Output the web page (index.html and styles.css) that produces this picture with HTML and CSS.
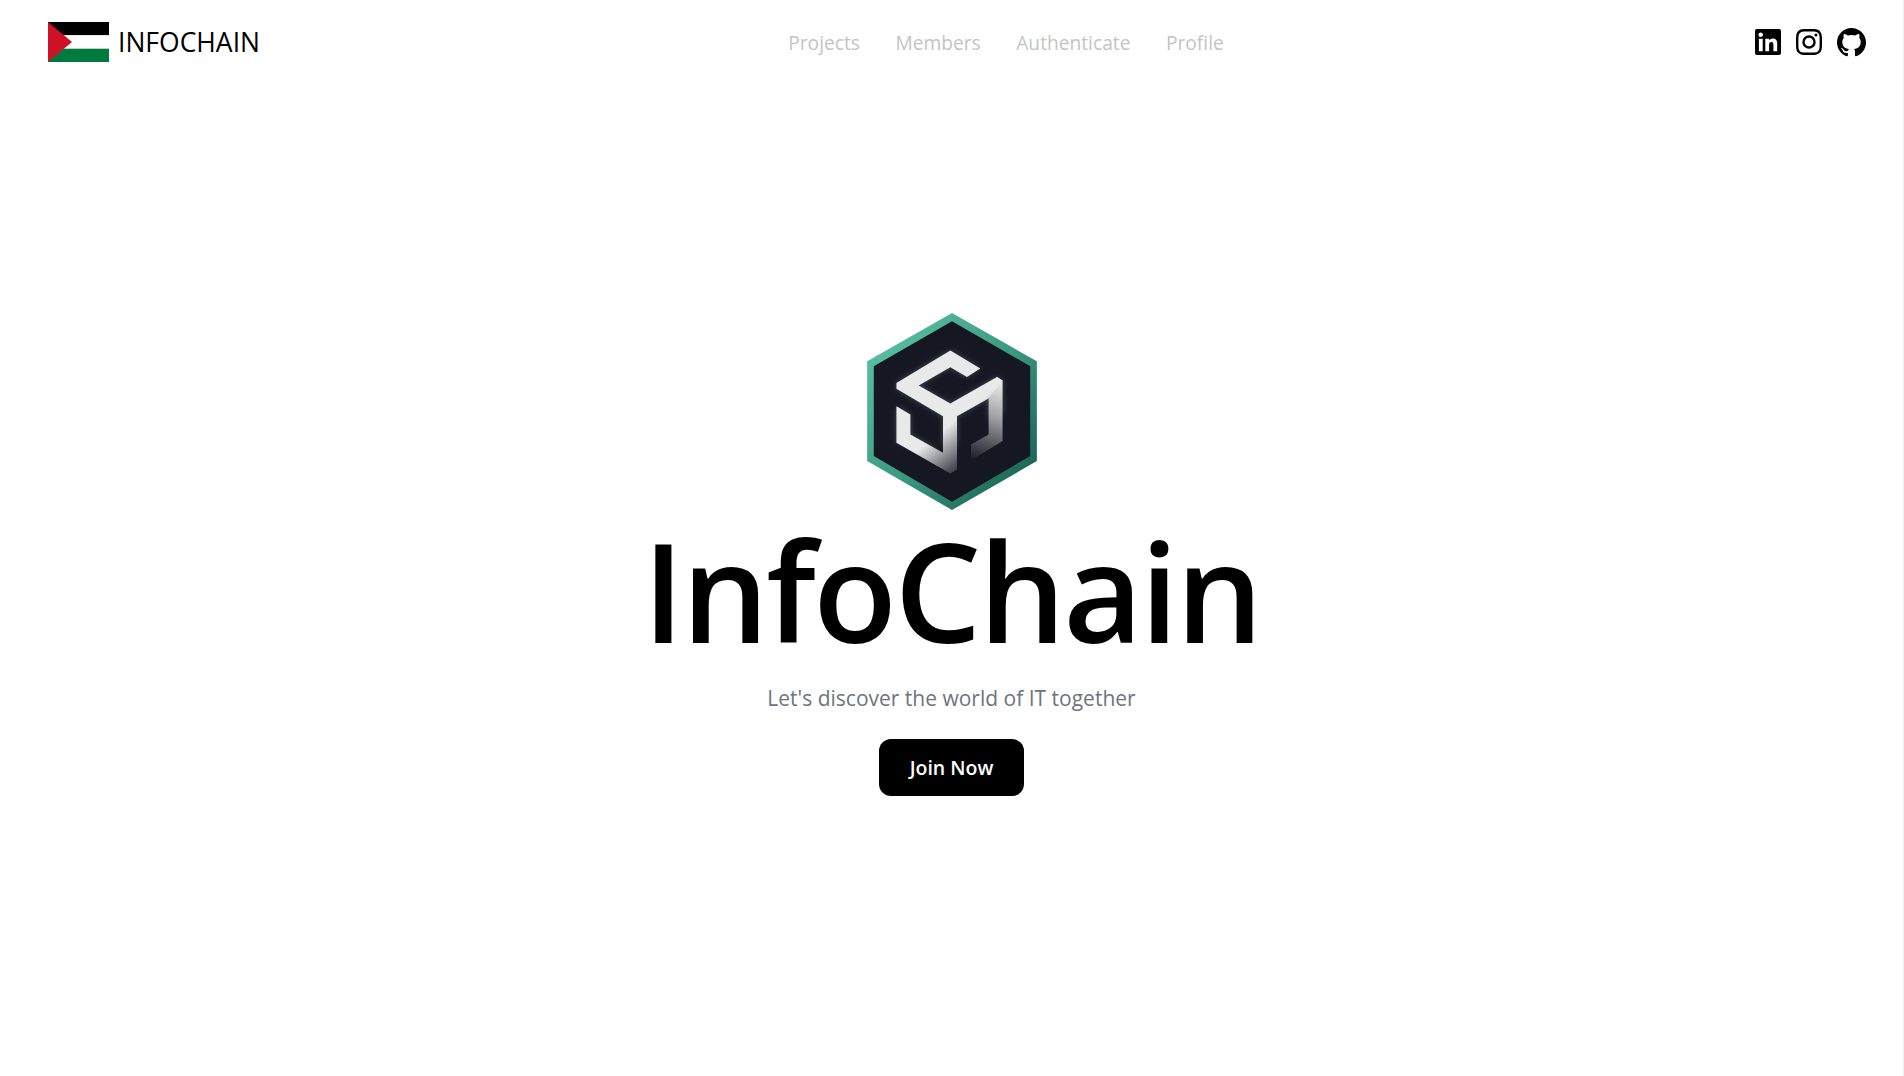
FILE: index.html
```html
<!DOCTYPE html>
<html lang="en">
<head>
<meta charset="utf-8">
<title>InfoChain</title>
<link rel="stylesheet" href="styles.css">
</head>
<body>
<header class="navbar">
  <a class="brand" href="#">
    <svg class="flag" viewBox="0 0 61 40" aria-hidden="true">
      <rect width="61" height="13.3" fill="#000"/>
      <rect y="13.3" width="61" height="13.4" fill="#fff"/>
      <rect y="26.7" width="61" height="13.3" fill="#007a3d"/>
      <path d="M0 0L24 20L0 40Z" fill="#ce1126"/>
    </svg>
    <span class="brand-name">INFOCHAIN</span>
  </a>
  <nav class="nav-links">
    <a href="#">Projects</a>
    <a href="#">Members</a>
    <a href="#">Authenticate</a>
    <a href="#">Profile</a>
  </nav>
  <div class="socials">
    <svg class="social" viewBox="0 0 24 24"><path d="M22.2 0H1.8C.8 0 0 .8 0 1.8v20.4C0 23.2.8 24 1.8 24h20.4c1 0 1.8-.8 1.8-1.800V1.800C24 .8 23.2 0 22.2 0zM7.100 20.500H3.600V9h3.500v11.500zM5.300 7.400c-1.100 0-2.100-.9-2.100-2.100s1-2 2.100-2 2.100.9 2.100 2-1 2.100-2.100 2.100zM20.500 20.500H17v-5.600c0-1.300 0-3-1.900-3s-2.100 1.400-2.100 2.900v5.700H9.500V9h3.400v1.600c.5-.9 1.600-1.900 3.400-1.900 3.600 0 4.200 2.400 4.200 5.500v6.300z"/></svg>
    <svg class="social" viewBox="0 0 24 24"><path d="M12 2.200c3.200 0 3.600 0 4.800.1 3.300.1 4.800 1.700 4.900 4.900.1 1.200.1 1.600.1 4.800s0 3.600-.1 4.800c-.1 3.200-1.700 4.800-4.900 4.900-1.200.1-1.600.1-4.800.1s-3.600 0-4.800-.1c-3.300-.1-4.800-1.700-4.900-4.900-.1-1.200-.1-1.600-.1-4.800s0-3.600.1-4.800c.1-3.200 1.700-4.800 4.900-4.900 1.200-.1 1.600-.1 4.800-.1zM12 0C8.700 0 8.300 0 7.100.1 2.700.3.300 2.700.1 7.100 0 8.300 0 8.700 0 12s0 3.700.1 4.900c.2 4.400 2.600 6.800 7 7C8.300 24 8.700 24 12 24s3.700 0 4.900-.1c4.400-.2 6.800-2.600 7-7 .1-1.200.1-1.600.1-4.900s0-3.700-.1-4.900c-.2-4.400-2.600-6.800-7-7C15.700 0 15.300 0 12 0zm0 5.800a6.200 6.200 0 1 0 0 12.400 6.200 6.200 0 0 0 0-12.400zM12 16a4 4 0 1 1 0-8 4 4 0 0 1 0 8zm6.400-11.800a1.400 1.400 0 1 0 0 2.800 1.400 1.400 0 0 0 0-2.800z"/></svg>
    <svg class="social social-gh" viewBox="0 0 24 24"><path d="M12 0C5.400 0 0 5.400 0 12c0 5.300 3.400 9.800 8.200 11.400.6.100.8-.3.800-.6v-2.200c-3.300.7-4-1.400-4-1.400-.5-1.400-1.300-1.800-1.300-1.800-1.100-.7.100-.7.100-.7 1.200.1 1.800 1.200 1.800 1.200 1.100 1.800 2.800 1.300 3.500 1 .1-.8.400-1.300.8-1.600-2.700-.3-5.500-1.300-5.500-5.900 0-1.300.5-2.400 1.200-3.200-.1-.3-.5-1.500.1-3.200 0 0 1-.3 3.300 1.200a11.500 11.500 0 0 1 6 0c2.300-1.500 3.300-1.200 3.300-1.200.7 1.700.2 2.900.1 3.200.8.800 1.200 1.900 1.200 3.200 0 4.600-2.800 5.600-5.500 5.900.4.400.8 1.100.8 2.200v3.300c0 .3.200.7.800.6C20.600 21.800 24 17.300 24 12c0-6.600-5.400-12-12-12z"/></svg>
  </div>
</header>
<main class="hero">
  <svg class="logo" viewBox="80 40 510 592" aria-hidden="true">
    <defs>
      <linearGradient id="rim" x1="0" y1="0" x2="1" y2="1">
        <stop offset="0" stop-color="#62c9ad"/>
        <stop offset="0.55" stop-color="#3a947e"/>
        <stop offset="1" stop-color="#125548"/>
      </linearGradient>
      <linearGradient id="faceA" x1="262" y1="428" x2="335" y2="520" gradientUnits="userSpaceOnUse">
        <stop offset="0" stop-color="#e8e9e9"/>
        <stop offset="1" stop-color="#3f4048"/>
      </linearGradient>
      <linearGradient id="faceB" x1="482" y1="250" x2="405" y2="480" gradientUnits="userSpaceOnUse">
        <stop offset="0" stop-color="#e8e9e9"/>
        <stop offset="0.4" stop-color="#a5a6a9"/>
        <stop offset="1" stop-color="#1d1e28"/>
      </linearGradient>
      <filter id="glow" x="-30%" y="-30%" width="160%" height="160%">
        <feGaussianBlur stdDeviation="10"/>
      </filter>
    </defs>
    <path d="M335 40L590 185V485L335 632L80 485V185Z" fill="url(#rim)"/>
    <path d="M335 65L570 200V470L335 607L100 470V200Z" fill="#151722"/>
    <path class="logo-glow" d="M330 153L420 207L380 232L330 203L235 258L330 312L470 232L487 243V340L445 360V297L350 350V440L308 440V350L168 268V250ZM168 320L210 345V405L300 455L260 450L168 430Z" filter="url(#glow)"/>
    <path d="M445 297L470 232L487 243V425L392 483V435L445 405Z" fill="url(#faceB)"/>
    <path d="M330 153L420 207L380 232L330 203L235 258L330 312L470 232L487 243L445 297L350 350V510L330 522L168 430V320L210 345V405L308 460V350L168 268V250Z" fill="url(#faceA)"/>
  </svg>
  <h1 class="title">InfoChain</h1>
  <p class="tagline">Let's discover the world of IT together</p>
  <a class="cta" href="#">Join Now</a>
</main>
</body>
</html>
```
FILE: styles.css
```css
* { box-sizing: border-box; }
html, body { margin: 0; height: 100%; }
body {
  font-family: "Open Sans", "Noto Sans", sans-serif;
  background: #fff;
  color: #000;
  display: flex;
  flex-direction: column;
  overflow: hidden;
  border-right: 1px solid #efefef;
}
a { text-decoration: none; color: inherit; }
.navbar {
  display: flex;
  justify-content: space-between;
  align-items: center;
  height: 84px;
  padding: 0 37px 0 48px;
}
.brand { display: flex; align-items: center; gap: 9px; }
.flag { width: 61px; height: 40px; display: block; }
.brand-name { font-size: 26.5px; }
.nav-links {
  display: flex;
  gap: 35.5px;
  font-size: 19.2px;
  color: #c4c4c4;
  margin-right: 3px;
}
.socials { display: flex; align-items: center; gap: 15px; }
.social { width: 26px; height: 26px; fill: #000; display: block; }
.social-gh { width: 29px; height: 29px; }
.logo-glow { fill: #7d9a97; opacity: 0.4; }
.hero {
  display: flex;
  flex-direction: column;
  align-items: center;
  padding-top: 229px;
}
.logo { width: 170px; height: 197px; display: block; }
.title {
  margin: 0;
  font-size: 137px;
  font-weight: 600;
  letter-spacing: -2.5px;
  line-height: 160px;
}
.tagline {
  margin: 13px 0 0;
  font-size: 21px;
  line-height: 30px;
  color: #6c757d;
}
.cta {
  margin-top: 26px;
  display: flex;
  align-items: center;
  justify-content: center;
  width: 145px;
  height: 57px;
  border-radius: 12px;
  background: #000;
  color: #fff;
  font-size: 19.5px;
  font-weight: 600;
}
```
